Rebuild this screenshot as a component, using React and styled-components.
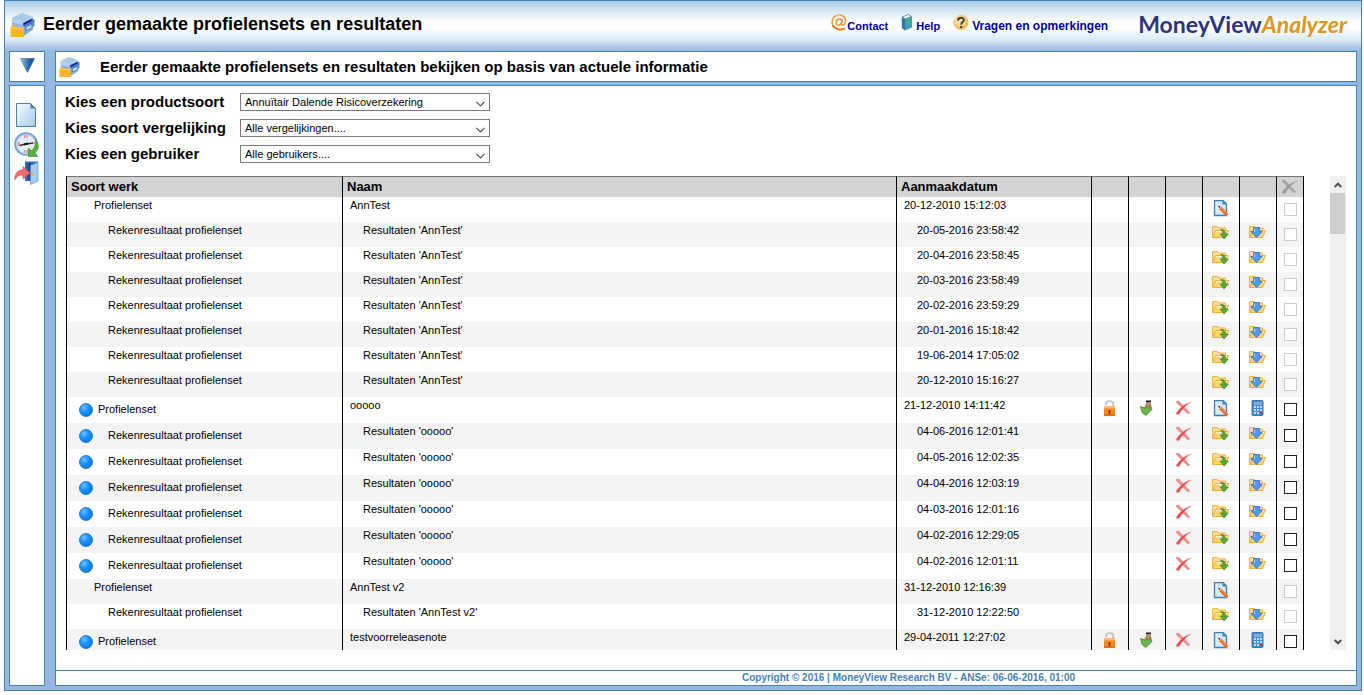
import React from 'react';
import styled, { createGlobalStyle } from 'styled-components';

const Global = createGlobalStyle`
  *, *::before, *::after { box-sizing: border-box; }
  html, body { margin: 0; padding: 0; background: #fff; }
  body { font-family: "Liberation Sans", Arial, sans-serif; color: #000; }
`;

const blue = '#4682b4';

const Frame = styled.div`
  display: flex;
  flex-direction: column;
  height: calc(100vh - 4px);
  min-height: 320px;
  margin: 0 2px 0 4px;
  border: 1px solid ${blue};
  background: #94b8e0;
`;

const Header = styled.header`
  display: flex;
  align-items: center;
  height: 50px;
  flex: none;
  padding: 0 14px 4px 5px;
  background: linear-gradient(#a9cbe8 0%, #d3e5f2 18%, #fbfdfd 40%, #fff 55%, #d9e9f4 78%, #94b8e0 100%);
`;

const PageTitle = styled.h1`
  flex: 1;
  margin: 0 0 0 8px;
  font-size: 18px;
  line-height: 24px;
  font-weight: bold;
  white-space: nowrap;
`;

const TopNav = styled.nav`
  display: flex;
  gap: 13px;
  margin-right: 30px;
  padding-top: 4px;
`;

const TopLink = styled.a`
  display: flex;
  align-items: flex-start;
  gap: ${(p) => p.$gap || 0}px;
  color: #0000a0;
  font-size: ${(p) => p.$size || 11}px;
  line-height: 24px;
  font-weight: bold;
  text-decoration: none;
  white-space: nowrap;
`;

const Logo = styled.div`
  flex: none;
  color: #2b3481;
  font-family: Lato, "Open Sans", sans-serif;
  font-size: 23px;
  line-height: 32px;
  font-weight: bold;
  white-space: nowrap;
  em { color: #dd961e; }
`;

const Body = styled.div`
  flex: 1;
  min-height: 0;
  display: grid;
  grid-template-columns: 36px minmax(0, 1fr);
  grid-template-rows: 31px minmax(0, 1fr);
  column-gap: 10px;
  row-gap: 3px;
  padding: 0 4px 4px;
`;

const Panel = styled.div`
  display: flex;
  border: 1px solid ${blue};
  background: #fff;
`;

const ToggleButton = styled.button`
  display: flex;
  align-items: center;
  justify-content: center;
  border: 1px solid ${blue};
  background: #fff;
  padding: 0 0 3px;
`;

const TitlePanel = styled(Panel)`
  align-items: center;
  padding-left: 3px;
`;

const SubTitle = styled.h2`
  margin: 0 0 0 20px;
  font-size: 15px;
  line-height: 20px;
  white-space: nowrap;
`;

const SideBar = styled(Panel)`
  flex-direction: column;
  align-items: center;
  gap: 4px;
  padding: 17px 2px 0 0;
`;

const IconButton = styled.button`
  display: flex;
  justify-content: center;
  width: 26px;
  border: 0;
  padding: 0;
  background: none;
`;

const Content = styled(Panel)`
  flex-direction: column;
`;

const Filters = styled.form`
  display: grid;
  grid-template-columns: 175px 250px;
  grid-auto-rows: 26px;
  align-items: center;
  padding: 3px 0 0 9px;
`;

const FilterLabel = styled.label`
  font-size: 15px;
  line-height: 20px;
  font-weight: bold;
  white-space: nowrap;
`;

const Select = styled.select`
  appearance: none;
  height: 18px;
  border: 1px solid #7a7a7a;
  border-radius: 0;
  padding: 0 20px 0 4px;
  background: #fff url("data:image/svg+xml,%3Csvg xmlns='http://www.w3.org/2000/svg' width='9' height='6'%3E%3Cpath d='M.5 .8L4.500 4.800L8.500 .8' fill='none' stroke='%23555' stroke-width='1.200'/%3E%3C/svg%3E") no-repeat right 4px top 7px;
  color: #000;
  font: 11px/16px "Liberation Sans", Arial, sans-serif;
`;

const ListArea = styled.div`
  flex: 1;
  min-height: 0;
  display: flex;
  justify-content: space-between;
  gap: 26px;
  margin: 9px 10px 20px 10px;
`;

const ListView = styled.div`
  flex: 1;
  min-width: 0;
  overflow: hidden;
`;

const Table = styled.table`
  width: 100%;
  table-layout: fixed;
  border-collapse: separate;
  border-spacing: 0;
`;

const Col = styled.col`
  width: ${(p) => (p.$w ? `${p.$w}px` : 'auto')};
`;

const Th = styled.th`
  height: 21px;
  border-top: 1px solid #777;
  border-left: 1px solid #000;
  padding: 0 4px;
  background: #d3d3d3;
  font-size: 13px;
  line-height: 20px;
  text-align: left;
  white-space: nowrap;
  &:last-child { border-right: 1px solid #000; }
`;

const Row = styled.tr`
  height: ${(p) => (p.$own ? 26 : 25)}px;
  background: ${(p) => (p.$shaded ? '#f4f4f4' : '#fff')};
`;

const Td = styled.td`
  border-left: 1px solid #000;
  padding: ${(p) => p.$top || 2}px 0 0 ${(p) => p.$indent || 0}px;
  vertical-align: top;
  font-size: 11px;
  line-height: 13px;
  white-space: nowrap;
`;

const KindCell = styled.div`
  display: flex;
  align-items: flex-start;
  gap: ${(p) => p.$gap}px;
`;

const IconCell = styled.td`
  border-left: 1px solid #000;
  padding: ${(p) => p.$top}px 0 0 9px;
  vertical-align: top;
  line-height: 0;
`;

const CheckCell = styled.td`
  border-left: 1px solid #000;
  border-right: 1px solid #000;
  padding: 6px 0 0 7px;
  vertical-align: top;
  line-height: 0;
`;

const Check = styled.input`
  appearance: none;
  display: block;
  width: 13px;
  height: 13px;
  margin: 0;
  border: 1px solid #222;
  background: #fff;
  &:disabled { border-color: #ccc; }
`;

const ActionButton = styled.button`
  display: block;
  border: 0;
  padding: 0;
  background: none;
  line-height: 0;
`;

const ScrollBar = styled.div`
  flex: none;
  display: flex;
  flex-direction: column;
  justify-content: space-between;
  width: 16px;
  background: #f0f0f0;
`;

const ScrollTop = styled.div`
  display: flex;
  flex-direction: column;
`;

const ScrollButton = styled.button`
  display: flex;
  align-items: center;
  justify-content: center;
  height: 17px;
  border: 0;
  padding: 0;
  background: none;
`;

const Thumb = styled.div`
  width: 15px;
  height: 41px;
  background: #cdcdcd;
`;

const Footer = styled.footer`
  flex: none;
  height: 15px;
  border-top: 1px solid ${blue};
  padding-left: 405px;
  color: ${blue};
  font-size: 10px;
  line-height: 14px;
  font-weight: bold;
  text-align: center;
  white-space: nowrap;
`;

const BoxIcon = ({ size }) => (
  <svg width={size} height={size} viewBox="0 0 24 24" aria-hidden="true">
    <path d="M2 5.500L11.500 1L22 4.500L13 9.500Z" fill="#a9cbe9" />
    <path d="M2 5.500L13 9.500V23L2 18Z" fill="#8ab7e0" />
    <path d="M2 5.500L13 9.500V13L2 10Z" fill="#b4d2ee" />
    <path d="M13 9.500L22 5V17L13 23Z" fill="#7fa9d4" />
    <path d="M12.500 11L21 6.500L23.500 7.500V10L14.500 14.500L12.500 13.500Z" fill="#4a7db8" />
    <path d="M12.500 11L20.500 7L21 8.500L13 12.700Z" fill="#14149c" />
    <path d="M14 14.500L23.500 9.700V13.500L14.500 19Z" fill="#5a8fc6" />
    <path d="M16 15L20.500 12.700V14.500L16 17Z" fill="#e4effa" />
    <path d="M.5 14.500L2 13H5.500L7 14.500H13.500V24H.5Z" fill="#fdb42a" />
    <path d="M1 15.500H13" stroke="#ffd466" />
  </svg>
);

const AtIcon = () => (
  <svg width="16" height="17" viewBox="0 0 16 17" aria-hidden="true">
    <path d="M14 14.300C10 16.800 1.300 16 1.200 8.500C1 3.500 4.500 1 8.200 1C12.500 1 15 4 14.600 7.500C14.200 11.500 10.300 12.200 10.600 9.500L11.400 4.800M10.800 7.500C10.500 3.700 5.200 4.300 5 8.700C5 12.300 9.700 12 10.600 8.500" fill="none" stroke="#f7943a" strokeWidth="1.500" />
    <path d="M2 6C3 2.500 6 1.300 9 1.300" fill="none" stroke="#fbc59a" />
    <path d="M2 11C3.500 15.500 10 16.500 14 14.300" fill="none" stroke="#f47a10" strokeWidth="1.800" />
  </svg>
);

const BookIcon = () => (
  <svg width="12" height="17" viewBox="0 0 12 17" aria-hidden="true">
    <path d="M1 3L7.500 .5L10.500 2.500L4 5Z" fill="#eef6fb" stroke="#3b7fae" strokeWidth=".8" />
    <path d="M.8 3L4 5V16.500L.8 14Z" fill="#2f76ac" />
    <path d="M4 5L11 2.500V13.500L4 16.500Z" fill="#4f93c6" />
    <path d="M6 7.500C6.300 5 9.500 4.500 9.500 6.500C9.500 8.300 7.800 8 7.800 10.500M7.600 12V13.500" fill="none" stroke="#22c55a" strokeWidth="1.500" />
  </svg>
);

const QuestionIcon = () => (
  <svg width="16" height="17" viewBox="0 0 17 17" aria-hidden="true">
    <circle cx="8.500" cy="8.500" r="8" fill="#f6bd52" />
    <circle cx="7.500" cy="7" r="6" fill="#fcdf9c" />
    <path d="M5.300 6.300C5.300 2.500 11.700 2.500 11.500 6C11.400 8 8.700 8 8.700 10.800" fill="none" stroke="#3d3d48" strokeWidth="2.100" />
    <circle cx="8.700" cy="13.200" r="1.300" fill="#3d3d48" />
  </svg>
);

const DownTriangle = () => (
  <svg width="15" height="15" viewBox="0 0 15 15" aria-hidden="true">
    <defs>
      <linearGradient id="tri"><stop offset="0" stopColor="#a5cdee" /><stop offset=".55" stopColor="#2a6eb4" /><stop offset="1" stopColor="#0b4288" /></linearGradient>
    </defs>
    <path d="M.5 .5H14.500L7.500 14.500Z" fill="url(#tri)" stroke="#2c69a8" strokeWidth=".6" />
  </svg>
);

const PageIcon = () => (
  <svg width="20" height="25" viewBox="0 0 20 25" aria-hidden="true">
    <defs>
      <linearGradient id="pg" x1="0" y1="0" x2="1" y2="1"><stop offset="0" stopColor="#f7fbfe" /><stop offset="1" stopColor="#a3cbeb" /></linearGradient>
    </defs>
    <path d="M.5 .5H14.500L19.500 5.500V23.500H.5Z" fill="url(#pg)" stroke="#4a7fae" />
    <path d="M14.500 .5V5.500H19.500Z" fill="#487ba8" />
  </svg>
);

const ClockIcon = () => (
  <svg width="25" height="25" viewBox="0 0 25 25" aria-hidden="true">
    <circle cx="12" cy="12" r="11" fill="#b3d3f1" stroke="#6a9fd2" strokeWidth="1.500" />
    <circle cx="12" cy="12" r="8.800" fill="#e2eefa" />
    <path d="M10.800 3V6M13.200 3V6M10.800 18V21M13.200 18V21M3.500 11H6M3.500 13H6M18.500 11H21" stroke="#f08080" strokeWidth="1.300" />
    <path d="M5.500 13.500L12 12L19 11" fill="none" stroke="#3a2a2a" strokeWidth="1.300" />
    <path d="M10 12.500L14 11.500" stroke="#111" strokeWidth="2.200" />
    <path d="M22 7.500C26 14 24 19 21 20.500L23.500 24.500H14.500V16L17.500 18.500C20 17 22 13 22 7.500Z" fill="#58b03e" stroke="#2e8422" strokeWidth=".6" />
  </svg>
);

const ExitIcon = () => (
  <svg width="25" height="24" viewBox="0 0 25 24" aria-hidden="true">
    <path d="M11 .5H24V20H11Z" fill="#2f6db5" />
    <path d="M13.500 2H17V19H13.500Z" fill="#1d4f92" />
    <path d="M16.500 4.500L24 1V20L16.500 23.500Z" fill="#a3cdf1" stroke="#4c8ccb" strokeWidth=".6" />
    <circle cx="18.500" cy="13.500" r="1.200" fill="#f2a73a" />
    <path d="M.6 19C.8 12 4 8.800 9 8.800V5.500L16 12L9 18V14C5 13.800 2.500 15.500 .6 19Z" fill="#f26a6a" stroke="#d94848" strokeWidth=".6" />
  </svg>
);

const BallIcon = () => (
  <svg width="14" height="14" viewBox="0 0 14 14" aria-hidden="true">
    <defs>
      <radialGradient id="ball" cx=".35" cy=".3" r=".75"><stop offset="0" stopColor="#6cc1ff" /><stop offset=".5" stopColor="#1490fb" /><stop offset="1" stopColor="#0a78ea" /></radialGradient>
    </defs>
    <circle cx="7" cy="7" r="6.500" fill="url(#ball)" stroke="#1668be" strokeWidth=".8" />
  </svg>
);

const LockIcon = () => (
  <svg width="17" height="16" viewBox="0 0 17 16" aria-hidden="true">
    <path d="M5 5V3.500C5 .2 12.200 .2 12.200 3.500V7" fill="none" stroke="#c2c2c2" strokeWidth="1.800" />
    <rect x="3" y="6.500" width="11" height="9.500" fill="#fb8a1e" />
    <path d="M3 7.500H14" stroke="#ffb970" strokeWidth="2" />
    <path d="M3 15H14" stroke="#ea7410" strokeWidth="2" />
    <path d="M7.500 11H9.500M8.500 11V14.500" stroke="#7d2f00" strokeWidth="1.400" />
  </svg>
);

const HandIcon = () => (
  <svg width="17" height="16" viewBox="0 0 17 16" aria-hidden="true">
    <path d="M8 .5H13V2.500H8Z" fill="#171717" />
    <path d="M8.500 2.500H12.500L14 7.500L11.500 10L6 7.500Z" fill="#cf9272" />
    <path d="M2.500 6.500L7 8L12 6L14 9.500L8 15.500L4 12.500Z" fill="#6cb64e" stroke="#3f8b2b" strokeWidth=".8" />
    <path d="M9.500 3L7.500 8.500M12 3.500L11 9" stroke="#a86f52" />
  </svg>
);

const CrossIcon = ({ grey }) => (
  <svg width="17" height="16" viewBox="0 0 17 16" aria-hidden="true">
    <path d="M.8 1.800L3.500 1L9 6.500L14.800 13L12.800 13.800L7 8.300Z" fill={grey ? '#a8a8a8' : '#f58b8b'} stroke={grey ? '#999' : '#e76b6b'} strokeWidth=".4" />
    <path d="M16 2C11.500 4.500 6.500 9.800 3.800 14.500L1 14C3.500 9.500 8.500 4 16 2Z" fill={grey ? '#9a9a9a' : '#f0484e'} stroke={grey ? '#999' : '#e76b6b'} strokeWidth=".4" />
  </svg>
);

const EditIcon = () => (
  <svg width="17" height="17" viewBox="0 0 17 17" aria-hidden="true">
    <path d="M2.500 .7H11.300L14.500 4V15.500H2.500Z" fill="#d5e9f8" stroke="#3f7fb4" strokeWidth="1.300" />
    <path d="M10.500 .7V4.500H14.500Z" fill="#3f7fb4" />
    <path d="M7 6.500L10 7.300L16.500 14L14.300 16.300L7.600 9.500Z" fill="#f0641a" />
    <path d="M9.300 8L15.300 14" stroke="#ffb070" strokeWidth="1" />
    <path d="M6.500 6L9.500 7L7.600 9Z" fill="#f5d9b0" />
    <path d="M6.300 5.800L8.400 6.500L7 8Z" fill="#111" />
  </svg>
);

const FolderBase = () => (
  <>
    <path d="M.6 12.500V1.600H5.500L7 3H13.500V12.500Z" fill="#ffe09a" stroke="#f2ad3a" />
    <path d="M.8 12.500L3.500 5.500H16.500L13.500 12.500Z" fill="#ffd474" stroke="#f2ad3a" />
    <path d="M4 6.500H15" stroke="#fff3cb" />
  </>
);

const FolderGreen = () => (
  <svg width="17" height="15" viewBox="0 0 17 15" aria-hidden="true">
    <FolderBase />
    <path d="M8.500 4.500C12 4 13.500 6 13.500 9H16.300L12 14L8 9H10.700C10.700 7 10.500 5.800 8.500 4.500Z" fill="#56a83a" stroke="#2f7e1d" strokeWidth=".6" />
  </svg>
);

const FolderBlue = () => (
  <svg width="17" height="15" viewBox="0 0 17 15" aria-hidden="true">
    <FolderBase />
    <path d="M4.500 2.500H10.500V6.500H13.200L7.500 12.500L1.800 6.500H4.500Z" fill="#4b9bf8" stroke="#2f6fce" strokeWidth=".8" />
    <path d="M5.500 3.500V7" stroke="#a8d1ff" />
  </svg>
);

const CalcIcon = () => (
  <svg width="17" height="17" viewBox="0 0 17 17" aria-hidden="true">
    <rect x="3" y=".5" width="11" height="15" rx="1" fill="#4a88cf" stroke="#3d74b8" />
    <rect x="5" y="2" width="8" height="3" fill="#7fb0e2" />
    {[6, 9, 12].map((y) => [5, 8, 11].map((x) => (
      <rect key={`${x}-${y}`} x={x} y={y} width="2" height="2" fill={x > 10 && y > 11 ? '#ee2222' : '#c4dff8'} />
    )))}
  </svg>
);

const Chevron = ({ up }) => (
  <svg width="8" height="6" viewBox="0 0 8 6" aria-hidden="true">
    <path d={up ? 'M.7 5L4 1.700L7.300 5' : 'M.7 1L4 4.300L7.300 1'} fill="none" stroke="#505050" strokeWidth="2" />
  </svg>
);

const result = (name, date, own) => ({ kind: 'Rekenresultaat profielenset', name: `Resultaten '${name}'`, date, own, child: true });
const set = (name, date, own) => ({ kind: 'Profielenset', name, date, own, child: false });

const rows = [
  set('AnnTest', '20-12-2010 15:12:03', false),
  result('AnnTest', '20-05-2016 23:58:42', false),
  result('AnnTest', '20-04-2016 23:58:45', false),
  result('AnnTest', '20-03-2016 23:58:49', false),
  result('AnnTest', '20-02-2016 23:59:29', false),
  result('AnnTest', '20-01-2016 15:18:42', false),
  result('AnnTest', '19-06-2014 17:05:02', false),
  result('AnnTest', '20-12-2010 15:16:27', false),
  set('ooooo', '21-12-2010 14:11:42', true),
  result('ooooo', '04-06-2016 12:01:41', true),
  result('ooooo', '04-05-2016 12:02:35', true),
  result('ooooo', '04-04-2016 12:03:19', true),
  result('ooooo', '04-03-2016 12:01:16', true),
  result('ooooo', '04-02-2016 12:29:05', true),
  result('ooooo', '04-02-2016 12:01:11', true),
  set('AnnTest v2', '31-12-2010 12:16:39', false),
  result('AnnTest v2', '31-12-2010 12:22:50', false),
  set('testvoorreleasenote', '29-04-2011 12:27:02', true),
];

const filters = [
  { id: 'product', label: 'Kies een productsoort', value: 'Annuïtair Dalende Risicoverzekering' },
  { id: 'compare', label: 'Kies soort vergelijking', value: 'Alle vergelijkingen....' },
  { id: 'user', label: 'Kies een gebruiker', value: 'Alle gebruikers....' },
];

const columns = [276, 0, 195, 37, 37, 37, 37, 37, 28];

const Action = ({ label, top, children }) => (
  <IconCell $top={top}>
    {children && <ActionButton type="button" aria-label={label}>{children}</ActionButton>}
  </IconCell>
);

const ListRow = ({ row, shaded }) => {
  const { own, child } = row;
  return (
    <Row $own={own} $shaded={shaded}>
      {own ? (
        <Td $top={6} $indent={12}>
          <KindCell $gap={child ? 15 : 5}><BallIcon />{row.kind}</KindCell>
        </Td>
      ) : (
        <Td $indent={child ? 41 : 27}>{row.kind}</Td>
      )}
      <Td $indent={child ? 20 : 7}>{row.name}</Td>
      <Td $indent={child ? 20 : 7}>{row.date}</Td>
      <Action label="Ontgrendelen" top={3}>{own && !child && <LockIcon />}</Action>
      <Action label="Overdragen" top={3}>{own && !child && <HandIcon />}</Action>
      <Action label="Verwijderen" top={3}>{own && <CrossIcon />}</Action>
      <Action label="Openen" top={3}>{child ? <FolderGreen /> : <EditIcon />}</Action>
      <Action label="Berekenen" top={3}>{child ? <FolderBlue /> : own && <CalcIcon />}</Action>
      <CheckCell><Check type="checkbox" disabled={!own} aria-label={`Selecteer ${row.name}`} /></CheckCell>
    </Row>
  );
};

export default function App() {
  return (
    <>
      <Global />
      <Frame>
        <Header>
          <BoxIcon size={25} />
          <PageTitle>Eerder gemaakte profielensets en resultaten</PageTitle>
          <TopNav>
            <TopLink href="#contact"><AtIcon />Contact</TopLink>
            <TopLink href="#help" $gap={3}><BookIcon />Help</TopLink>
            <TopLink href="#vragen" $gap={3} $size={12}><QuestionIcon />Vragen en opmerkingen</TopLink>
          </TopNav>
          <Logo>MoneyView<em>Analyzer</em></Logo>
        </Header>
        <Body>
          <ToggleButton type="button" aria-label="Menu"><DownTriangle /></ToggleButton>
          <TitlePanel>
            <BoxIcon size={21} />
            <SubTitle>Eerder gemaakte profielensets en resultaten bekijken op basis van actuele informatie</SubTitle>
          </TitlePanel>
          <SideBar>
            <IconButton type="button" aria-label="Nieuw"><PageIcon /></IconButton>
            <IconButton type="button" aria-label="Eerdere resultaten"><ClockIcon /></IconButton>
            <IconButton type="button" aria-label="Afsluiten"><ExitIcon /></IconButton>
          </SideBar>
          <Content>
            <Filters>
              {filters.map((f) => (
                <React.Fragment key={f.id}>
                  <FilterLabel htmlFor={f.id}>{f.label}</FilterLabel>
                  <Select id={f.id}><option>{f.value}</option></Select>
                </React.Fragment>
              ))}
            </Filters>
            <ListArea>
              <ListView>
                <Table>
                  <colgroup>{columns.map((w, i) => <Col key={i} $w={w} />)}</colgroup>
                  <thead>
                    <tr>
                      <Th>Soort werk</Th><Th>Naam</Th><Th>Aanmaakdatum</Th>
                      <Th /><Th /><Th /><Th /><Th />
                      <Th><ActionButton type="button" aria-label="Selectie verwijderen"><CrossIcon grey /></ActionButton></Th>
                    </tr>
                  </thead>
                  <tbody>
                    {rows.map((row, i) => <ListRow key={i} row={row} shaded={i % 2 === 1} />)}
                  </tbody>
                </Table>
              </ListView>
              <ScrollBar>
                <ScrollTop>
                  <ScrollButton type="button" aria-label="Omhoog"><Chevron up /></ScrollButton>
                  <Thumb />
                </ScrollTop>
                <ScrollButton type="button" aria-label="Omlaag"><Chevron /></ScrollButton>
              </ScrollBar>
            </ListArea>
            <Footer>Copyright © 2016 | MoneyView Research BV - ANSe: 06-06-2016, 01:00</Footer>
          </Content>
        </Body>
      </Frame>
    </>
  );
}
